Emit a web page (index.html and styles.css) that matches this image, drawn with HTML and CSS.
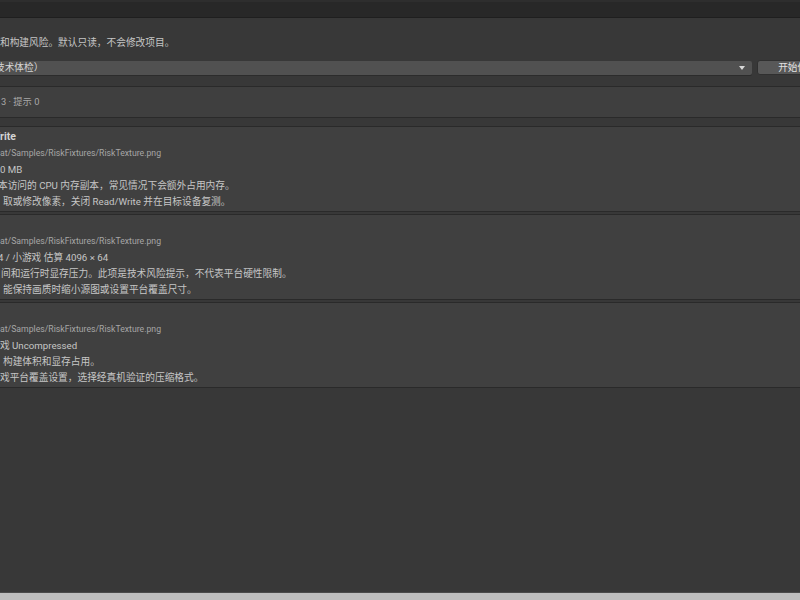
FILE: index.html
```html
<!DOCTYPE html>
<html lang="zh-CN">
<head>
<meta charset="utf-8">
<title>技术体检</title>
<link rel="stylesheet" href="styles.css">
</head>
<body>
<div class="window">
  <div class="header"></div>
  <div class="main">
    <p class="desc">和构建风险。默认只读，不会修改项目。</p>
    <div class="toolbar">
      <div class="dropdown">
        <span class="dropdown-label">技术体检）</span>
        <span class="arrow"></span>
      </div>
      <div class="button">开始体检</div>
    </div>
    <div class="summary"><span class="summary-text">3 · 提示 0</span></div>
    <div class="card">
      <div class="title clipw">Write</div>
      <div class="path clip1">at/Samples/RiskFixtures/RiskTexture.png</div>
      <div class="line clip1">0 MB</div>
      <div class="line clip3">本访问的 CPU 内存副本，常见情况下会额外占用内存。</div>
      <div class="line indent">取或修改像素，关闭 Read/Write 并在目标设备复测。</div>
    </div>
    <div class="card">
      <div class="title">&nbsp;</div>
      <div class="path clip1">at/Samples/RiskFixtures/RiskTexture.png</div>
      <div class="line clip3">4 / 小游戏 估算 4096 × 64</div>
      <div class="line">间和运行时显存压力。此项是技术风险提示，不代表平台硬性限制。</div>
      <div class="line indent">能保持画质时缩小源图或设置平台覆盖尺寸。</div>
    </div>
    <div class="card">
      <div class="title">&nbsp;</div>
      <div class="path clip1">at/Samples/RiskFixtures/RiskTexture.png</div>
      <div class="line clip1">戏 Uncompressed</div>
      <div class="line indent">构建体积和显存占用。</div>
      <div class="line clip1">戏平台覆盖设置，选择经真机验证的压缩格式。</div>
    </div>
  </div>
  <div class="statusbar"></div>
</div>
</body>
</html>
```
FILE: styles.css
```css
html, body {
  margin: 0;
  padding: 0;
  height: 100%;
  overflow: hidden;
  background: #383838;
}

body {
  font-family: "Roboto", "Noto Sans CJK SC", sans-serif;
  font-size: 9.7px;
  color: #c6c6c6;
}

.window {
  display: flex;
  flex-direction: column;
  width: 880px;
  height: 600px;
  margin-left: -20px;
  overflow: hidden;
}

.header {
  flex: none;
  height: 18px;
  box-sizing: border-box;
  background: #282828;
  border-top: 2px solid #2e2e2e;
  border-bottom: 1px solid #1f1f1f;
}

.main {
  flex: 1;
  padding: 17px 0 0 20px;
  background: #383838;
}

.desc {
  margin: 0 0 9px 0;
  line-height: 16px;
}

.toolbar {
  display: flex;
  align-items: center;
  height: 15px;
  width: 860px;
  margin-left: -20px;
}

.dropdown {
  flex: 1;
  height: 14px;
  background: #515151;
  border-radius: 2px;
  display: flex;
  align-items: center;
  padding-left: 15px;
  padding-right: 6px;
  color: #d6d6d6;
  box-shadow: 0 1px 0 #2c2c2c;
}

.dropdown-label {
  flex: 1;
  line-height: 14px;
}

.arrow {
  width: 0;
  height: 0;
  border-left: 3.5px solid transparent;
  border-right: 3.5px solid transparent;
  border-top: 4px solid #d8d8d8;
  margin-right: 1px;
}

.button {
  flex: none;
  width: 81px;
  height: 15px;
  margin-left: 5px;
  margin-right: 2px;
  background: #585858;
  border: 1px solid #303030;
  border-radius: 3px;
  box-sizing: border-box;
  color: #e2e2e2;
  text-align: center;
  line-height: 13px;
}

.summary {
  margin: 11px 0 0 -20px;
  border-top: 1px solid #2a2a2a;
  border-bottom: 1px solid #2a2a2a;
  background: #3f3f3f;
  height: 28px;
  padding: 0 0 2px 21px;
  display: flex;
  align-items: center;
  color: #a8a8a8;
  font-size: 9.3px;
}

.card {
  margin: 8px 0 0 -20px;
  border: 1px solid #2a2a2a;
  background: #404040;
  padding: 2px 0 1px 20px;
}

.card + .card {
  margin-top: 2px;
}

.title {
  line-height: 16px;
  font-weight: 700;
  font-size: 10.5px;
  color: #d4d4d4;
}

.path {
  line-height: 17px;
  font-size: 8.7px;
  color: #a6a6a6;
}

.line {
  line-height: 16px;
}

.clip1 { text-indent: -1px; }
.clip3 { text-indent: -3px; }
.clipw { text-indent: -10px; }
.indent { text-indent: 2px; }

.summary-text {
  display: block;
}

.statusbar {
  flex: none;
  height: 7px;
  background: #bdbdbd;
  border-top: 1px solid #4a4a4a;
}
```
